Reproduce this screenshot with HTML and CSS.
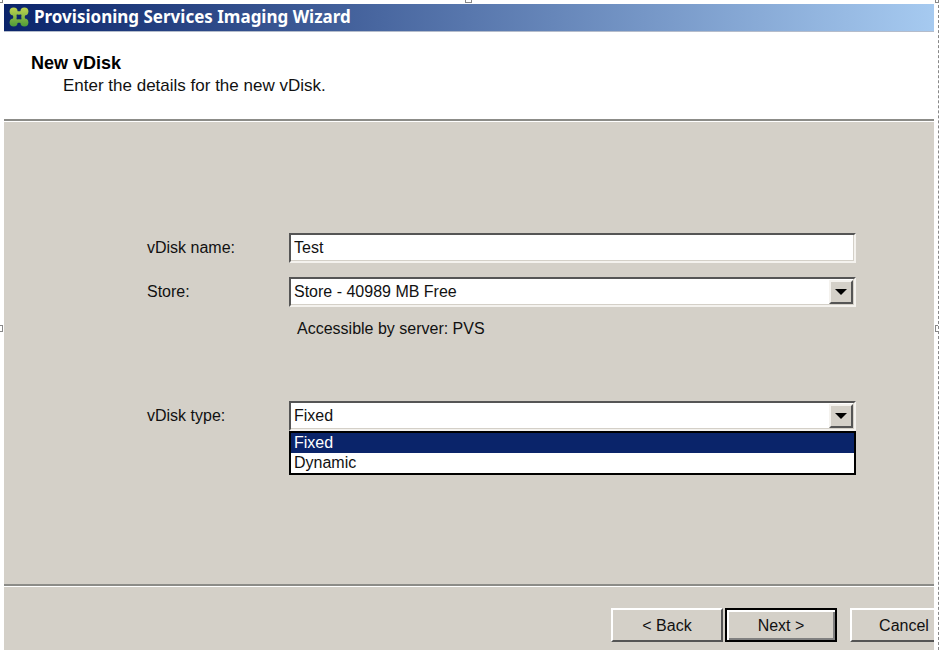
FILE: index.html
```html
<!DOCTYPE html>
<html lang="en">
<head>
    <meta charset="UTF-8">
    <meta name="viewport" content="width=device-width, initial-scale=1.0">
    <title>Provisioning Services Imaging Wizard</title>
    <link rel="stylesheet" href="styles.css">
</head>
<body>

<div class="frame">
  <div class="wizard">
    <!-- Title bar -->
    <div class="title-bar">
      <svg class="title-icon" viewBox="0 0 20 20" aria-hidden="true">
        <defs>
          <linearGradient id="leaf" gradientUnits="userSpaceOnUse" x1="0" y1="0" x2="0" y2="20">
            <stop offset="0" stop-color="#c3d651" />
            <stop offset="1" stop-color="#4a9a38" />
          </linearGradient>
        </defs>
        <path d="M5 5 Q10 7 15 5 Q13 10 15 15 Q10 13 5 15 Q7 10 5 5 Z" fill="none" stroke="url(#leaf)" stroke-width="3.4" />
        <g fill="url(#leaf)">
          <circle cx="4.6" cy="4.6" r="4" />
          <circle cx="15.4" cy="4.6" r="4" />
          <circle cx="4.6" cy="15.4" r="4" />
          <circle cx="15.4" cy="15.4" r="4" />
        </g>
      </svg>
      <span>Provisioning Services Imaging Wizard</span>
    </div>

    <!-- Page heading -->
    <div class="wizard-header">
      <h1>New vDisk</h1>
      <p>Enter the details for the new vDisk.</p>
    </div>

    <!-- vDisk details -->
    <form class="wizard-body" id="vdisk-form">
      <div class="form-row">
        <label for="vdisk-name">vDisk name:</label>
        <input type="text" id="vdisk-name" class="field" value="Test">
      </div>
      <div class="form-row">
        <label for="store">Store:</label>
        <div class="select-box">
          <select id="store" class="field">
            <option>Store - 40989 MB Free</option>
          </select>
          <span class="select-arrow"></span>
        </div>
      </div>
      <p class="store-note">Accessible by server: PVS</p>
      <div class="form-row">
        <label for="vdisk-type">vDisk type:</label>
        <div class="select-box">
          <select id="vdisk-type" class="field">
            <option selected>Fixed</option>
            <option>Dynamic</option>
          </select>
          <span class="select-arrow"></span>
          <ul class="select-list" role="listbox" aria-label="vDisk type">
            <li class="active" role="option" aria-selected="true">Fixed</li>
            <li role="option" aria-selected="false">Dynamic</li>
          </ul>
        </div>
      </div>
    </form>

    <!-- Navigation -->
    <div class="wizard-footer">
      <button type="button" class="btn">&lt; Back</button>
      <button type="submit" form="vdisk-form" class="btn btn-default">Next &gt;</button>
      <button type="button" class="btn btn-cancel">Cancel</button>
    </div>
  </div>

  <!-- Selection handles -->
  <span class="handle top-left"></span>
  <span class="handle top"></span>
  <span class="handle top-right"></span>
  <span class="handle left"></span>
  <span class="handle right"></span>
</div>

</body>
</html>
```
FILE: styles.css
```css
* {
  box-sizing: border-box;
}

body {
  margin: 0;
  background-color: #fff;
  color: #111;
  font-family: "Liberation Sans", Arial, sans-serif;
  font-size: 16px;
  line-height: 20px;
}

.frame {
  position: relative;
  display: flex;
  min-height: 100vh;
  padding: 4px 4px 0;
  border-right: 1px dashed #888;
  overflow: hidden;
}

.wizard {
  flex: 1;
  display: flex;
  flex-direction: column;
  background-color: #d4d0c8;
  overflow: hidden;
}

/* Title bar */
.title-bar {
  display: flex;
  align-items: center;
  gap: 5px;
  height: 28px;
  padding: 0 5px 2px;
  background: linear-gradient(to right, #0a246a, #a6caf0);
  border-bottom: 1px solid #b4bccb;
  color: #fff;
  font-family: "Noto Sans", Tahoma, sans-serif;
  font-size: 17px;
  font-weight: bold;
}

.title-icon {
  width: 20px;
  height: 20px;
}

/* Page heading */
.wizard-header {
  height: 89px;
  padding: 18px 27px;
  background-color: #fff;
  border-bottom: 2px solid #8c8c88;
}

.wizard-header h1 {
  margin: 0;
  font-size: 18px;
  line-height: 26px;
  color: #000;
}

.wizard-header p {
  margin: 0 0 0 32px;
  font-size: 17px;
}

/* Form */
.wizard-body {
  flex: 1;
  padding: 111px 78px 20px 143px;
  border-top: 1px solid #fff;
}

.form-row {
  display: grid;
  grid-template-columns: 142px 1fr;
  align-items: center;
  margin-bottom: 14px;
}

.field {
  display: block;
  width: 100%;
  height: 30px;
  margin: 0;
  padding: 0 3px;
  appearance: none;
  background-color: #fff;
  border: 2px solid;
  border-color: #555 #f4f2ee #f4f2ee #555;
  border-radius: 0;
  box-shadow: inset -1px -1px #d4d0c8;
  outline: none;
  color: #111;
  font: inherit;
}

.select-box {
  position: relative;
}

.select-arrow {
  position: absolute;
  top: 3px;
  right: 3px;
  bottom: 3px;
  display: flex;
  align-items: center;
  justify-content: center;
  width: 24px;
  background-color: #d4d0c8;
  border: 2px solid;
  border-color: #f4f2ee #555 #555 #f4f2ee;
  pointer-events: none;
}

.select-arrow::before {
  content: "";
  border: 6px solid transparent;
  border-top-color: #000;
  border-bottom: 0;
}

.select-list {
  position: absolute;
  top: 100%;
  left: 0;
  right: 0;
  margin: 0;
  padding: 0;
  list-style: none;
  background-color: #fff;
  border: 2px solid #000;
}

.select-list li {
  padding: 0 3px;
}

.select-list .active {
  background-color: #0a246a;
  color: #fff;
}

.store-note {
  margin: -2px 0 62px;
  padding-left: 150px;
}

/* Navigation */
.wizard-footer {
  display: flex;
  justify-content: flex-end;
  gap: 2px;
  height: 66px;
  padding-top: 22px;
  border-top: 2px solid #8c8c88;
  box-shadow: inset 0 1px #fff;
}

.btn {
  flex: none;
  width: 112px;
  height: 34px;
  padding: 2px 0 0;
  background-color: #d4d0c8;
  border: 2px solid;
  border-color: #fff #555 #555 #fff;
  border-radius: 0;
  color: #111;
  font: inherit;
}

.btn-default {
  border-color: #000;
  box-shadow: inset 2px 2px #fff, inset -2px -2px #808080;
}

/* Cancel runs past the right edge of the window */
.btn-cancel {
  margin-left: 11px;
  margin-right: -28px;
  padding-right: 4px;
}

/* Selection handles */
.handle {
  position: absolute;
  width: 7px;
  height: 7px;
  background-color: #fff;
  border: 1px solid #888;
}

.top-left {
  top: -4px;
  left: -4px;
}

.top {
  top: -4px;
  left: calc(50% - 4px);
}

.top-right {
  top: -4px;
  right: -4px;
}

.left {
  top: 50%;
  left: -4px;
}

.right {
  top: 50%;
  right: -4px;
}
```
